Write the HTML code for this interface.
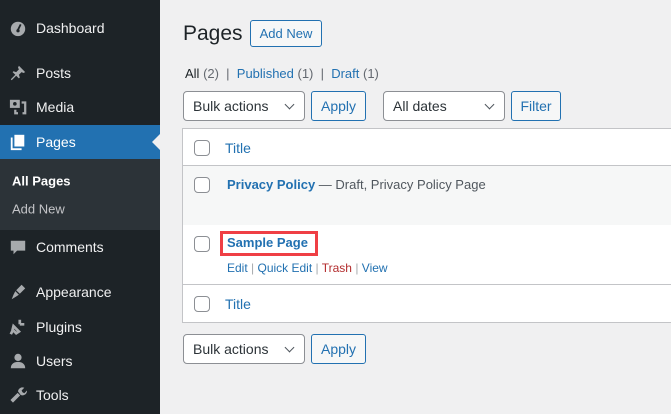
<!DOCTYPE html>
<html><head><style>
*{box-sizing:border-box;margin:0;padding:0}
body{width:671px;height:414px;overflow:hidden;background:#f0f0f1;font-family:"Liberation Sans",sans-serif;font-size:13px;color:#3c434a;position:relative}
.side{position:absolute;left:0;top:0;width:160px;height:414px;background:#1d2327}
.mi{position:absolute;left:0;width:160px;color:#f0f0f1;font-size:14px}
.mi span{position:absolute;left:36px;transform:translateY(-50%)}
.ic{position:absolute;left:9px;width:18px;height:18px;transform:translateY(-50%)}
.abs{position:absolute}
.btn{position:absolute;border:1px solid #2271b1;border-radius:3px;color:#2271b1;background:#f6f7f7;font-size:13px;display:flex;align-items:center;justify-content:center}
.sel{position:absolute;border:1px solid #8c8f94;border-radius:4px;background:#fff;font-size:14px;color:#2c3338;padding-left:9px;display:flex;align-items:center}
.sel:after{content:"";position:absolute;right:11px;top:9px;width:6px;height:6px;border-right:1.6px solid #50575e;border-bottom:1.6px solid #50575e;transform:rotate(45deg)}
.cb{position:absolute;left:11px;width:16px;height:16px;border:1px solid #8c8f94;border-radius:4px;background:#fff}
a{color:#2271b1;text-decoration:none}
</style></head><body>
<div class="side">
<div class="abs" style="top:125px;left:0;width:160px;height:34px;background:#2271b1"></div>
<div class="abs" style="top:159px;left:0;width:160px;height:71px;background:#2c3338"></div>
<div class="abs" style="left:152px;top:134px;width:0;height:0;border-top:8px solid transparent;border-bottom:8px solid transparent;border-right:8px solid #f0f0f1"></div>
<div class="mi" style="top:28px"><svg class="ic" viewBox="0 0 20 20"><circle cx="10" cy="11" r="8" fill="#a7aaad"/><path d="M10 12 L13 6" stroke="#1d2327" stroke-width="2"/><circle cx="10" cy="13" r="1.8" fill="#1d2327"/></svg><span>Dashboard</span></div>
<div class="mi" style="top:73px"><svg class="ic" viewBox="0 0 20 20"><path d="M11 2l7 7-2 1-2-1-3 3 1 3-1 1-3-3-5 5-1-1 5-5-3-3 1-1 3 1 3-3-1-2z" fill="#a7aaad"/></svg><span>Posts</span></div>
<div class="mi" style="top:107px"><svg class="ic" viewBox="0 0 20 20"><rect x="1" y="2" width="11" height="9" fill="#a7aaad"/><circle cx="6.5" cy="6.5" r="2" fill="#1d2327"/><path d="M14 5h4v12h-3M7 13v4h3" stroke="#a7aaad" stroke-width="2.5" fill="none"/></svg><span>Media</span></div>
<div class="mi" style="top:142px;color:#fff"><svg class="ic" viewBox="0 0 20 20"><path d="M6 2h11v13H6z" fill="#fff"/><path d="M3 5v13h11" stroke="#fff" stroke-width="2" fill="none"/></svg><span>Pages</span></div>
<div class="mi" style="top:181px;font-size:13px;font-weight:bold;color:#fff"><span style="left:12px">All Pages</span></div>
<div class="mi" style="top:209px;font-size:13px;color:#c3c4c7"><span style="left:12px">Add New</span></div>
<div class="mi" style="top:247px"><svg class="ic" viewBox="0 0 20 20"><path d="M2 3h16v11h-9l-4 4v-4H2z" fill="#a7aaad"/></svg><span>Comments</span></div>
<div class="mi" style="top:292px"><svg class="ic" viewBox="0 0 20 20"><path d="M14 2l4 4-6 6-4-4z M7 9l4 4-3 2-5 3 2-5z" fill="#a7aaad"/></svg><span>Appearance</span></div>
<div class="mi" style="top:327px"><svg class="ic" viewBox="0 0 20 20"><path d="M12 2v5M17 7h-5M5 9l6 6-3 2-4-4zM4 14l-2 4" stroke="#a7aaad" stroke-width="3" fill="none"/></svg><span>Plugins</span></div>
<div class="mi" style="top:361px"><svg class="ic" viewBox="0 0 20 20"><circle cx="10" cy="6" r="4" fill="#a7aaad"/><path d="M2 18c0-5 4-7 8-7s8 2 8 7z" fill="#a7aaad"/></svg><span>Users</span></div>
<div class="mi" style="top:395px"><svg class="ic" viewBox="0 0 20 20"><path d="M3 17l8-8" stroke="#a7aaad" stroke-width="4"/><path d="M10 6a5 5 0 0 1 7-4l-3 3 1 2 2 1 3-3a5 5 0 0 1-7 5z" fill="#a7aaad"/></svg><span>Tools</span></div>
</div>

<div class="abs" style="left:183px;top:22px;font-size:21px;color:#1d2327">Pages</div>
<div class="btn" style="left:250px;top:20px;width:72px;height:27px">Add New</div>
<div class="abs" style="left:185px;top:66px;font-size:13px;color:#646970"><b style="color:#1d2327;font-weight:normal">All</b> (2) &nbsp;| &nbsp;<a>Published</a> (1) &nbsp;| &nbsp;<a>Draft</a> (1)</div>
<div class="sel" style="left:183px;top:91px;width:122px;height:30px">Bulk actions</div>
<div class="btn" style="left:311px;top:91px;width:55px;height:30px;font-size:14px">Apply</div>
<div class="sel" style="left:383px;top:91px;width:122px;height:30px">All dates</div>
<div class="btn" style="left:511px;top:91px;width:50px;height:30px;font-size:14px">Filter</div>

<div class="abs" style="left:182px;top:128px;width:500px;height:195px;border:1px solid #c3c4c7;background:#fff">
 <div class="abs" style="left:0;top:0;width:100%;height:37px;border-bottom:1px solid #c3c4c7"><div class="cb" style="top:11px"></div><a class="abs" style="left:42px;top:11px;font-size:14px">Title</a></div>
 <div class="abs" style="left:0;top:37px;width:100%;height:59px;background:#f6f7f7"><div class="cb" style="top:11px"></div><div class="abs" style="left:44px;top:11px;font-size:13px;color:#50575e;white-space:nowrap"><a style="font-weight:bold">Privacy Policy</a> — Draft, Privacy Policy Page</div></div>
 <div class="abs" style="left:0;top:96px;width:100%;height:60px;border-bottom:1px solid #c3c4c7"><div class="cb" style="top:11px"></div>
  <div class="abs" style="left:37px;top:6px;width:98px;height:25px;border:3px solid #ef3f45"></div>
  <a class="abs" style="left:44px;top:10px;font-weight:bold">Sample Page</a>
  <div class="abs" style="left:44px;top:36px;font-size:12px;color:#a7aaad;white-space:nowrap"><a>Edit</a> | <a>Quick Edit</a> | <a style="color:#b32d2e">Trash</a> | <a>View</a></div>
 </div>
 <div class="abs" style="left:0;top:157px;width:100%;height:37px"><div class="cb" style="top:10px"></div><a class="abs" style="left:42px;top:10px;font-size:14px">Title</a></div>
</div>

<div class="sel" style="left:183px;top:334px;width:122px;height:30px">Bulk actions</div>
<div class="btn" style="left:311px;top:334px;width:55px;height:30px;font-size:14px">Apply</div>
</body></html>
